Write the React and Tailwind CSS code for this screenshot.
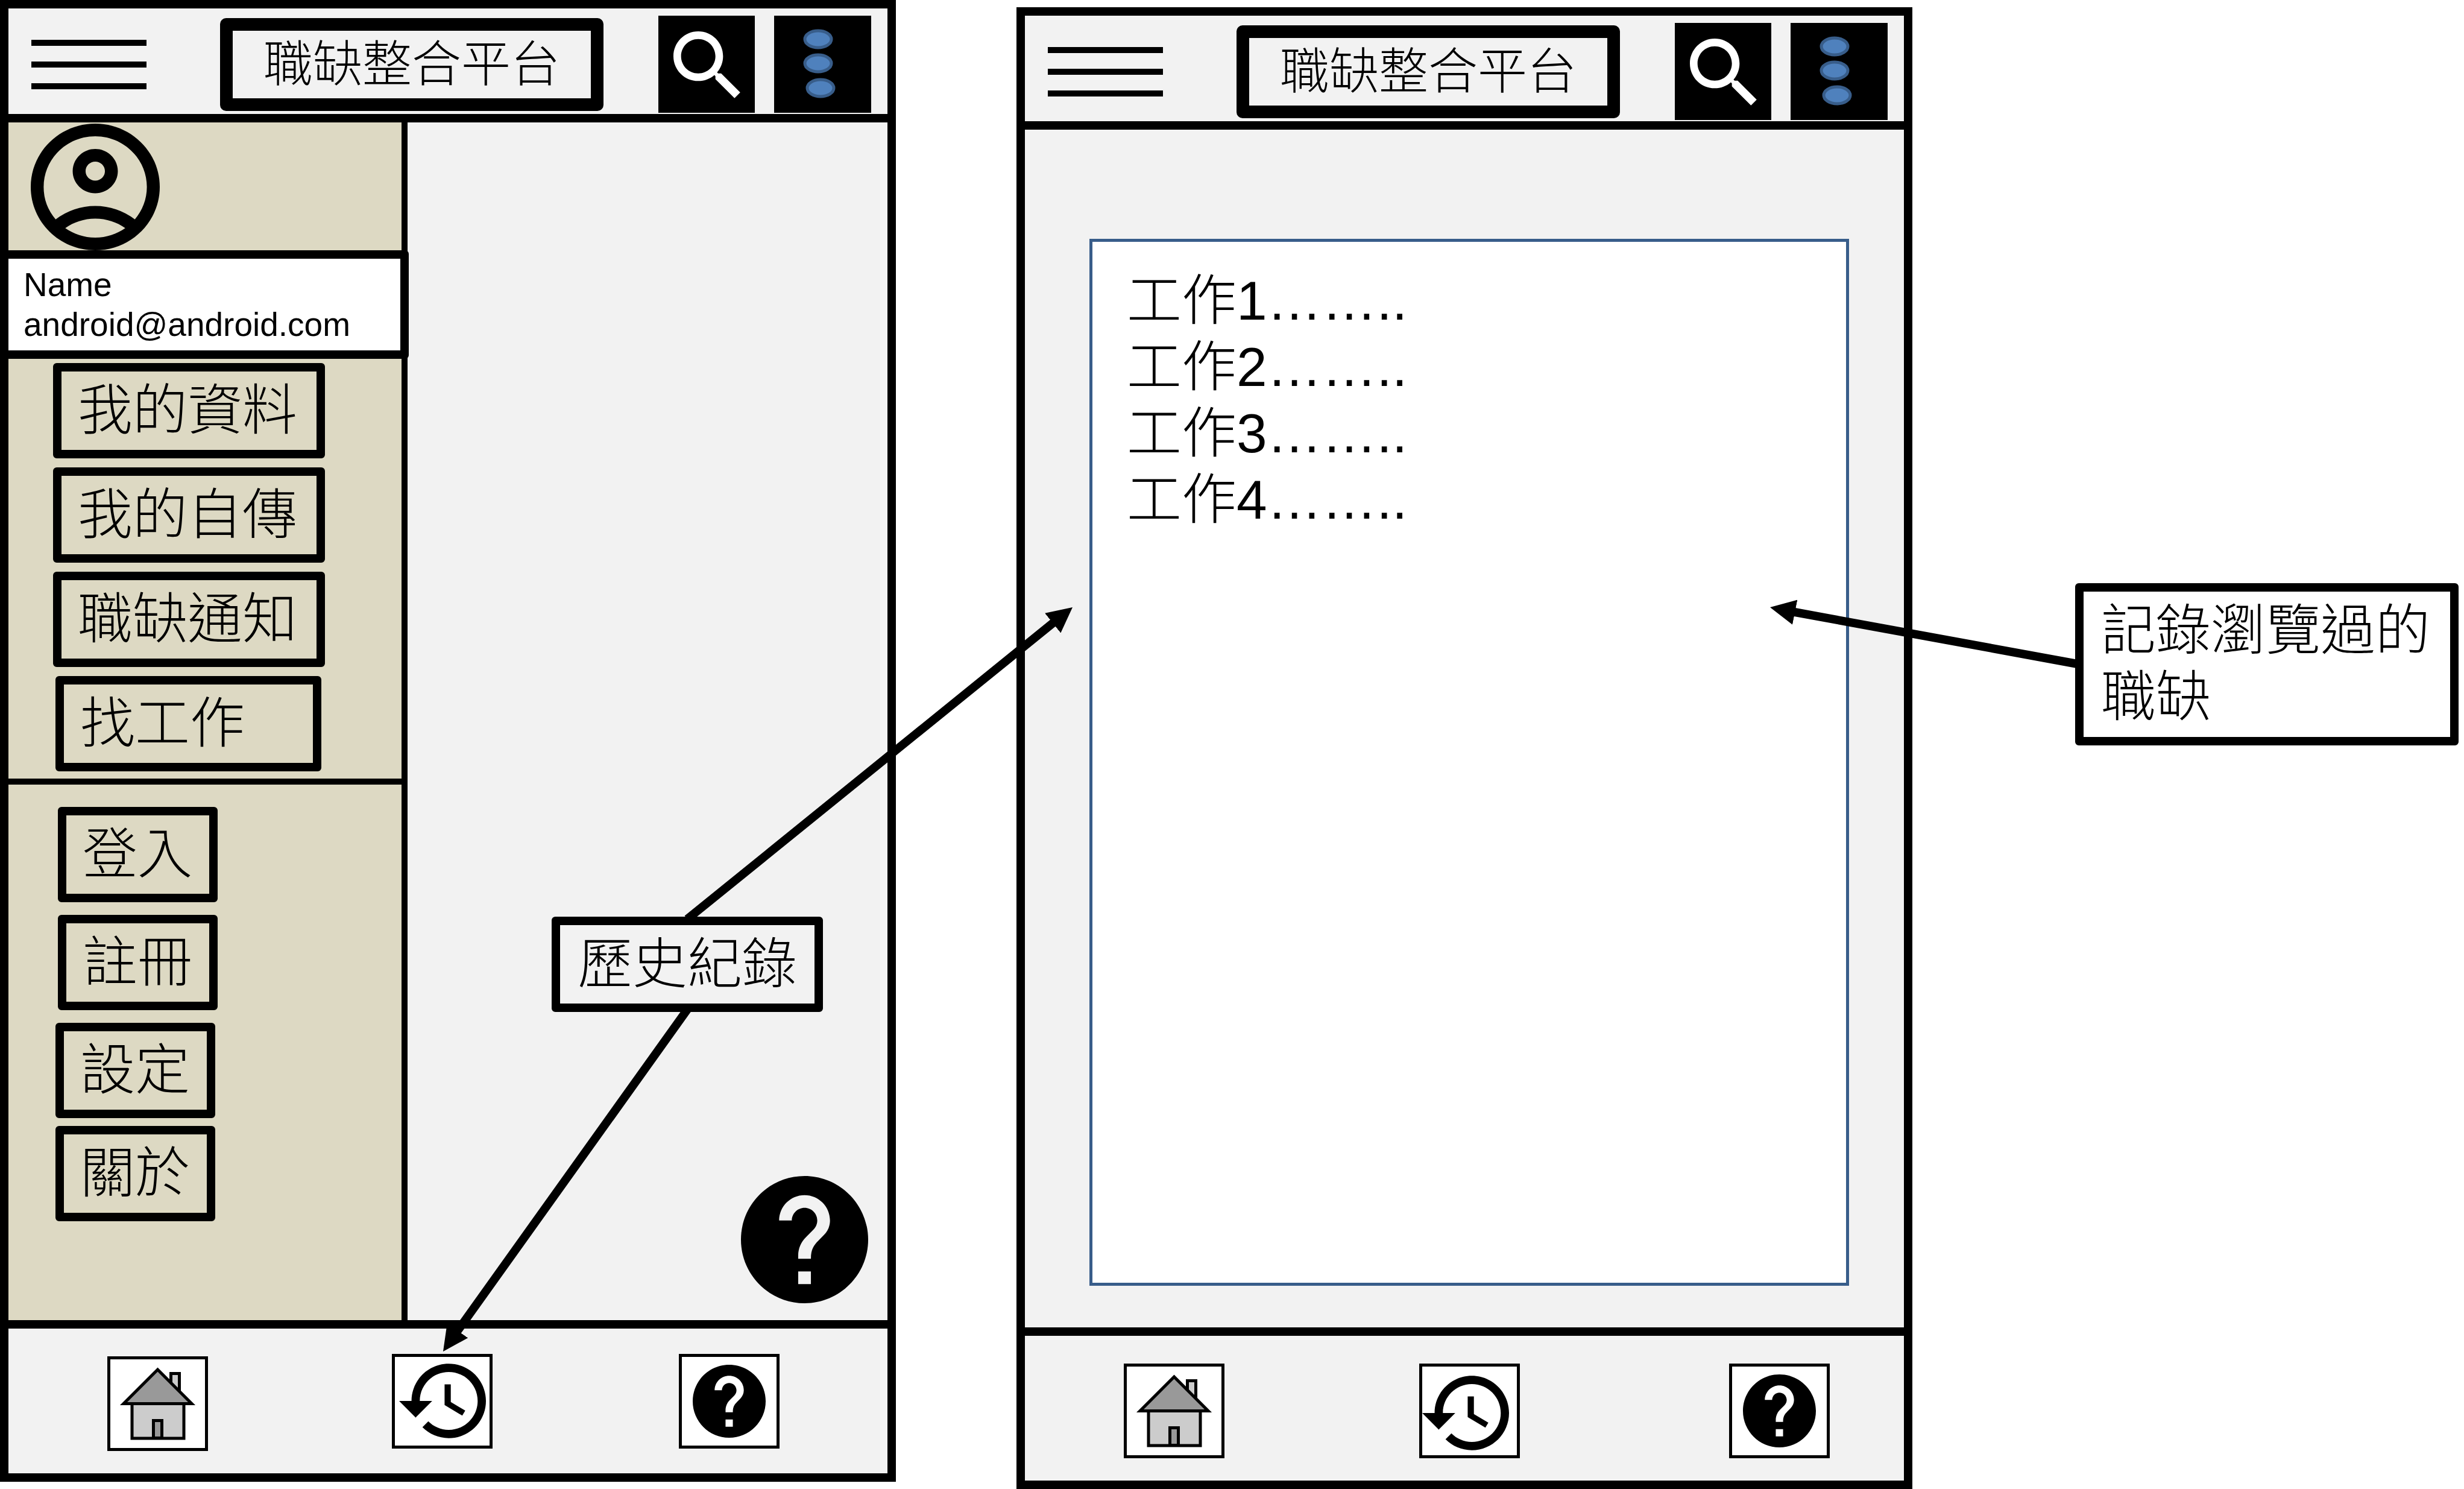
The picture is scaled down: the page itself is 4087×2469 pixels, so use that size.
const JOBS = ['工作1……..', '工作2……..', '工作3……..', '工作4……..'];

const HELP_PATH =
  'M12 2C6.48 2 2 6.48 2 12s4.48 10 10 10 10-4.48 10-10S17.52 2 12 2zm1 17h-2v-2h2v2zm2.07-7.75l-.9.92C13.45 12.9 13 13.5 13 15h-2v-.5c0-1.1.45-2.1 1.17-2.83l1.24-1.26c.37-.36.59-.86.59-1.41 0-1.1-.9-2-2-2s-2 .9-2 2H8c0-2.21 1.79-4 4-4s4 1.79 4 4c0 .88-.36 1.68-.93 2.25z';

function HelpIcon({ className }) {
  return (
    <svg viewBox="2 2 20 20" className={className} aria-hidden="true">
      <path d={HELP_PATH} />
    </svg>
  );
}

function AccountIcon() {
  return (
    <svg viewBox="2 2 20 20" className="ml-[37px] h-[210px] w-[214px]" preserveAspectRatio="none" role="img" aria-label="Account">
      <path
        fillRule="evenodd"
        d="M12 2C6.48 2 2 6.48 2 12s4.48 10 10 10 10-4.48 10-10S17.52 2 12 2zM7.35 18.5C8.66 17.56 10.26 17 12 17s3.34.56 4.65 1.5C15.34 19.44 13.74 20 12 20s-3.34-.56-4.65-1.5zm10.79-1.38a9.947 9.947 0 0 0-12.28 0A7.957 7.957 0 0 1 4 12c0-4.42 3.58-8 8-8s8 3.58 8 8c0 1.95-.7 3.73-1.86 5.12zM12 6c-1.93 0-3.5 1.57-3.5 3.5S10.07 13 12 13s3.5-1.57 3.5-3.5S13.93 6 12 6zm0 5c-.83 0-1.5-.67-1.5-1.5S11.17 8 12 8s1.5.67 1.5 1.5S12.83 11 12 11z"
      />
    </svg>
  );
}

function SearchIcon() {
  return (
    <svg viewBox="0 0 24 24" className="mt-1 ml-1 h-[152px] w-[152px] fill-white" aria-hidden="true">
      <path d="M15.5 14h-.79l-.28-.27C15.41 12.59 16 11.11 16 9.5 16 5.91 13.09 3 9.5 3S3 5.91 3 9.5 5.91 16 9.5 16c1.61 0 3.09-.59 4.23-1.57l.27.28v.79l5 4.99L20.49 19l-4.99-5zm-6 0C7.01 14 5 11.99 5 9.5S7.01 5 9.5 5 14 7.01 14 9.5 11.99 14 9.5 14z" />
    </svg>
  );
}

function DotsIcon() {
  return (
    <svg viewBox="0 0 161 161" className="h-full w-full" fill="#4f81bd" stroke="#385d8a" strokeWidth="5" aria-hidden="true">
      <ellipse cx="73" cy="39" rx="22" ry="14" />
      <ellipse cx="73" cy="79" rx="22" ry="14" />
      <ellipse cx="77" cy="120" rx="22" ry="14" />
    </svg>
  );
}

function HouseIcon() {
  return (
    <svg viewBox="0 0 157 147" className="h-full w-full" stroke="#000" strokeWidth="5" aria-hidden="true">
      <rect x="100.5" y="23.5" width="14" height="42" fill="#ccc" />
      <rect x="36" y="73" width="86" height="58" fill="#ccc" />
      <rect x="71.5" y="101.5" width="14" height="29" fill="#999" />
      <polygon points="78.5,17 135,73.5 22,73.5" fill="#999" />
    </svg>
  );
}

function HistoryIcon() {
  return (
    <svg viewBox="1 3 21 18" className="h-[124px] w-[144px]" aria-hidden="true">
      <path d="M13 3c-4.97 0-9 4.03-9 9H1l3.89 3.89.07.14L9 12H6c0-3.87 3.13-7 7-7s7 3.13 7 7-3.13 7-7 7c-1.93 0-3.68-.79-4.94-2.06l-1.42 1.42C8.27 19.99 10.51 21 13 21c4.97 0 9-4.03 9-9s-4.03-9-9-9zm-1 5v5l4.28 2.54.72-1.21-3.5-2.08V8H12z" />
    </svg>
  );
}

function Header() {
  return (
    <header className="flex items-center border-b-14 border-black pt-3 pr-[27px] pb-[2px] pl-[38px]">
      <button aria-label="選單" className="flex w-[191px] flex-col gap-[26px]">
        <span className="h-[10px] w-full bg-black" />
        <span className="h-[10px] w-full bg-black" />
        <span className="h-[10px] w-full bg-black" />
      </button>
      <h1 className="mr-[91px] ml-[122px] flex-1 rounded-[10px] border-21 border-black text-center text-[82px] leading-[112px] whitespace-nowrap">
        職缺整合平台
      </h1>
      <button aria-label="搜尋" className="mr-8 flex h-[161px] w-[160px] items-center justify-center bg-black">
        <SearchIcon />
      </button>
      <button aria-label="更多" className="h-[161px] w-[161px] bg-black">
        <DotsIcon />
      </button>
    </header>
  );
}

function NavButton({ label, className, children }) {
  return (
    <button
      aria-label={label}
      className={`flex h-[157px] w-[167px] items-center border-5 border-black bg-white ${className}`}
    >
      {children}
    </button>
  );
}

function Footer({ className, homeClass, historyClass, helpClass }) {
  return (
    <nav className={`flex h-[254px] items-center border-t-14 border-black pl-[164px] ${className}`}>
      <NavButton label="首頁" className={`justify-center ${homeClass}`}>
        <HouseIcon />
      </NavButton>
      <NavButton label="歷史紀錄" className={historyClass}>
        <HistoryIcon />
      </NavButton>
      <NavButton label="說明" className={`justify-center ${helpClass}`}>
        <HelpIcon className="h-[121px] w-[121px]" />
      </NavButton>
    </nav>
  );
}

function MenuButton({ className, children }) {
  return (
    <button className={`rounded-md border-14 border-black px-[27px] text-left text-[91px] leading-[130px] whitespace-nowrap ${className}`}>
      {children}
    </button>
  );
}

function Sidebar() {
  return (
    <aside className="w-[662px] border-r-10 border-black bg-[#ddd9c3]">
      <div className="pt-[2px]">
        <AccountIcon />
      </div>
      <div className="-mr-3 -ml-[14px] rounded-r-md border-14 border-black bg-white px-[25px] py-[10px] text-[55px] leading-[66px]">
        <p>Name</p>
        <p>android@android.com</p>
      </div>
      <div className="flex flex-col items-start gap-[15px] border-b-10 border-black pt-[7px] pb-3 pl-[74px]">
        <MenuButton className="w-[451px]">我的資料</MenuButton>
        <MenuButton className="w-[451px]">我的自傳</MenuButton>
        <MenuButton className="w-[451px]">職缺通知</MenuButton>
        <MenuButton className="ml-1 w-[441px]">找工作</MenuButton>
      </div>
      <div className="flex flex-col items-start gap-[21px] pt-[37px] pl-[82px]">
        <MenuButton className="w-[265px]">登入</MenuButton>
        <MenuButton className="w-[265px]">註冊</MenuButton>
      </div>
      <div className="flex flex-col items-start gap-[13px] pt-[21px] pl-[78px]">
        <MenuButton className="w-[265px]">設定</MenuButton>
        <MenuButton className="w-[265px]">關於</MenuButton>
      </div>
    </aside>
  );
}

function Arrows() {
  return (
    <svg
      viewBox="0 0 4087 2469"
      preserveAspectRatio="none"
      className="pointer-events-none absolute inset-0 h-full w-full"
      stroke="#000"
      strokeWidth="14"
      aria-hidden="true"
    >
      <defs>
        <marker id="head" viewBox="0 0 10 10" refX="10" refY="5" markerWidth="3" markerHeight="3" orient="auto">
          <path d="M0 0L10 5L0 10z" stroke="none" />
        </marker>
      </defs>
      <path d="M1140 1524L1754 1027" />
      <path d="M1754 1027L1779 1007" stroke="none" markerEnd="url(#head)" />
      <path d="M1140 1674L753 2215" />
      <path d="M753 2215L735 2241" stroke="none" markerEnd="url(#head)" />
      <path d="M3446 1101L2966 1013" />
      <path d="M2966 1013L2936 1007" stroke="none" markerEnd="url(#head)" />
    </svg>
  );
}

export default function App() {
  return (
    <main
      lang="zh-Hant"
      className="relative grid min-h-screen grid-cols-[1486fr_200fr_1486fr_270fr_636fr_9fr] bg-white font-['Liberation_Sans','Noto_Sans_CJK_TC',sans-serif] font-light text-black"
    >
      <section className="mb-3 flex flex-col border-14 border-black bg-[#f2f2f2]">
        <Header />
        <div className="relative flex flex-1">
          <Sidebar />
          <button aria-label="說明" className="absolute right-8 bottom-7">
            <HelpIcon className="h-[211px] w-[211px]" />
          </button>
        </div>
        <Footer className="gap-x-[305px]" homeClass="mt-2" historyClass="justify-center" helpClass="ml-1" />
      </section>

      <section className="col-start-3 mt-3 flex flex-col border-14 border-black bg-[#f2f2f2]">
        <Header />
        <div className="flex flex-1 pt-[181px] pr-[91px] pb-[69px] pl-[107px]">
          <ul className="flex-1 border-5 border-[#385d8a] bg-white px-[57px] pt-[43px] text-[91px] leading-[110px]">
            {JOBS.map((job) => (
              <li key={job}>{job}</li>
            ))}
          </ul>
        </div>
        <Footer className="gap-x-[323px] pt-2" homeClass="" historyClass="justify-start pt-2" helpClass="ml-6" />
      </section>

      <p className="col-start-5 mt-[967px] self-start rounded-md border-14 border-black pt-[10px] pb-[11px] pl-[29px] text-[91px] leading-[110px]">
        記錄瀏覽過的
        <br />
        職缺
      </p>

      <Arrows />
      <p className="absolute top-[1520px] left-[915px] rounded-md border-14 border-black bg-[#f2f2f2] px-[29px] text-[91px] leading-[130px]">
        歷史紀錄
      </p>
    </main>
  );
}
